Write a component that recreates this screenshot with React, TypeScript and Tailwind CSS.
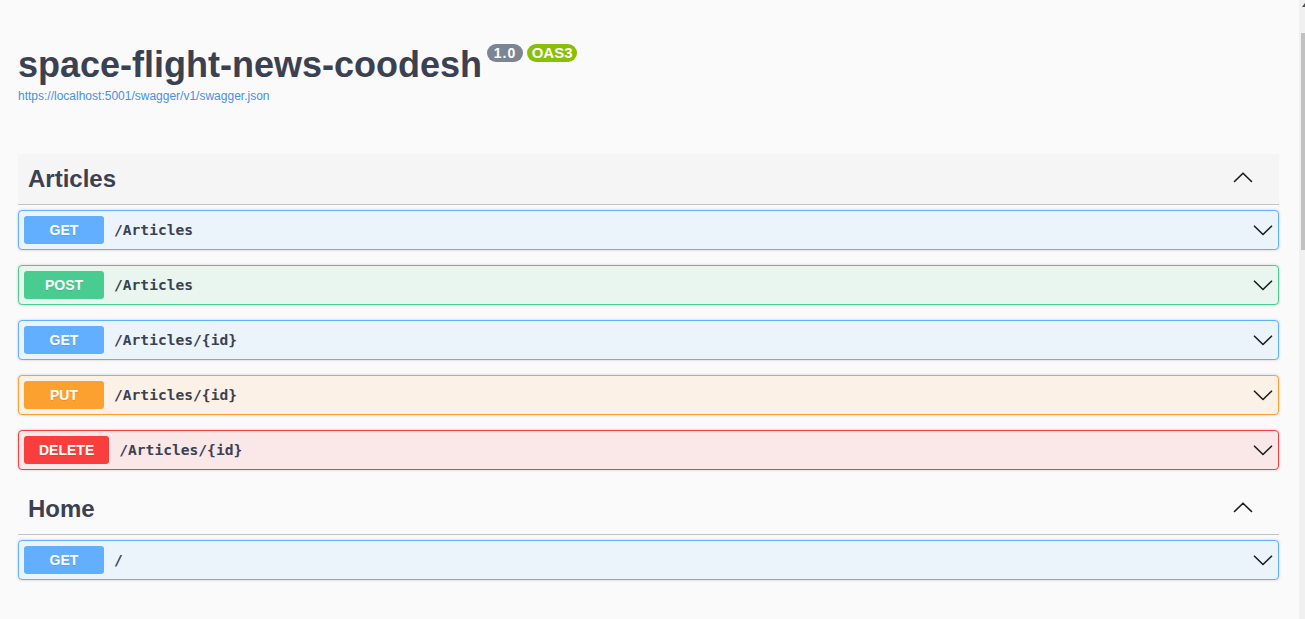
import React from "react";

type Op = { method: string; path: string; border: string; bg: string; badge: string };

const articles: Op[] = [
  { method: "GET", path: "/Articles", border: "border-[#61affe]", bg: "bg-[#ebf3fb]", badge: "bg-[#61affe]" },
  { method: "POST", path: "/Articles", border: "border-[#49cc90]", bg: "bg-[#e8f6ef]", badge: "bg-[#49cc90]" },
  { method: "GET", path: "/Articles/{id}", border: "border-[#61affe]", bg: "bg-[#ebf3fb]", badge: "bg-[#61affe]" },
  { method: "PUT", path: "/Articles/{id}", border: "border-[#fca130]", bg: "bg-[#fbf1e6]", badge: "bg-[#fca130]" },
  { method: "DELETE", path: "/Articles/{id}", border: "border-[#f93e3e]", bg: "bg-[#fae7e7]", badge: "bg-[#f93e3e]" },
];

const home: Op[] = [
  { method: "GET", path: "/", border: "border-[#61affe]", bg: "bg-[#ebf3fb]", badge: "bg-[#61affe]" },
];

function Chevron({ up }: { up?: boolean }) {
  return (
    <svg width="20" height="20" viewBox="0 0 20 20" className="shrink-0" aria-hidden="true">
      <path
        d={up ? "M1.5 13.5 L10 5.2 L18.5 13.5" : "M1.5 6.2 L10 14.5 L18.5 6.2"}
        fill="none"
        stroke="#1b1b1b"
        strokeWidth="1.6"
        strokeLinecap="round"
        strokeLinejoin="round"
      />
    </svg>
  );
}

function Row({ op }: { op: Op }) {
  return (
    <div
      className={`mb-[15px] flex h-[40px] items-center rounded-[4px] border p-[5px] shadow-[0_0_3px_rgba(0,0,0,0.19)] ${op.border} ${op.bg}`}
    >
      <div
        className={`flex h-[28px] min-w-[80px] items-center justify-center rounded-[3px] px-[15px] text-[14px] font-bold text-white [text-shadow:0_1px_0_rgba(0,0,0,0.1)] ${op.badge}`}
      >
        {op.method}
      </div>
      <div
        className="ml-[10px] flex-1 text-[14.6px] font-bold text-[#3b4151]"
        style={{ fontFamily: '"DejaVu Sans Mono", monospace' }}
      >
        {op.path}
      </div>
      <Chevron />
    </div>
  );
}

function Section({ name, ops, hovered }: { name: string; ops: Op[]; hovered?: boolean }) {
  return (
    <div>
      <div
        className={`mb-[5px] flex h-[51px] items-center border-b border-[#c1c3c7] pl-[10px] pr-[26px] ${
          hovered ? "bg-[#f5f5f5]" : ""
        }`}
      >
        <h3 className="flex-1 text-[24px] leading-[30px] font-bold text-[#3b4151]">{name}</h3>
        <div className="-mt-[2px]">
          <Chevron up />
        </div>
      </div>
      {ops.map((op, i) => (
        <Row key={i} op={op} />
      ))}
    </div>
  );
}

export default function App() {
  return (
    <div
      className="relative min-h-screen bg-[#fafafa]"
      style={{ fontFamily: '"Liberation Sans", Arial, sans-serif' }}
    >
      <div className="w-[1279px] pl-[18px] pt-[44px]">
        <div className="flex items-start">
          <h2 className="text-[36px] leading-[41px] font-bold text-[#3b4151]">space-flight-news-coodesh</h2>
          <span className="ml-[5px] flex h-[18px] w-[36px] items-center justify-center rounded-full bg-[#7d8492] text-[14px] leading-[14px] font-bold tracking-[1px] text-white">
            1.0
          </span>
          <span className="ml-[4px] flex h-[18px] w-[50px] items-center justify-center rounded-full bg-[#89bf04] text-[15px] leading-[14px] font-bold text-white">
            OAS3
          </span>
        </div>
        <a className="mt-[3px] block text-[12px] leading-[16px] text-[#4990e2]">
          https://localhost:5001/swagger/v1/swagger.json
        </a>
        <div className="mt-[50px] flex flex-col">
          <Section name="Articles" ops={articles} hovered />
          <div className="-mt-[1px]">
            <Section name="Home" ops={home} />
          </div>
        </div>
      </div>
      <div className="absolute right-0 top-0 h-full w-[6px] bg-[#f1f1f1]">
        <div className="absolute left-[3px] top-[3px] h-0 w-0 border-x-[3px] border-b-[4px] border-x-transparent border-b-[#505050]" />
        <div className="absolute left-[2px] top-[33px] h-[217px] w-[4px] bg-[#c1c1c1]" />
      </div>
    </div>
  );
}
